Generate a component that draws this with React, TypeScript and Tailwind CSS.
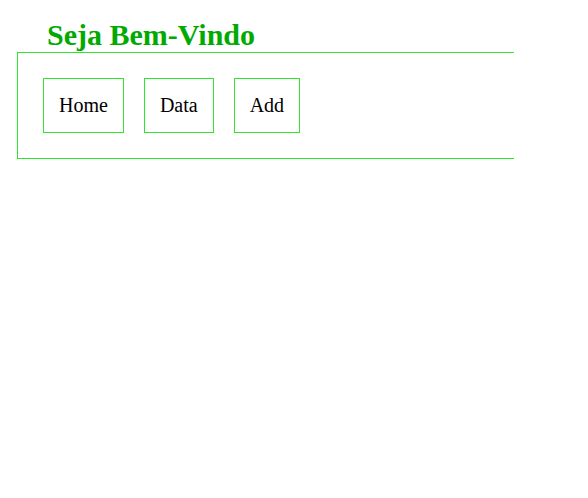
const links = ['Home', 'Data', 'Add']

export default function App() {
  return (
    <div className="min-h-[498px] bg-white font-['Liberation_Serif',serif] text-black">
      <h1 className="pt-[18px] pl-[47px] text-[30px] font-bold leading-[34px] text-[#00aa00]">Seja Bem-Vindo</h1>
      <nav className="ml-[17px] flex w-[497px] gap-[20px] border-y border-l border-[#2ee62e] p-[25px]">
        {links.map(l => (
          <div key={l} className="border border-[#2ee62e] px-[15px] py-[15px] text-[20px] leading-[23px]">
            {l}
          </div>
        ))}
      </nav>
    </div>
  )
}
